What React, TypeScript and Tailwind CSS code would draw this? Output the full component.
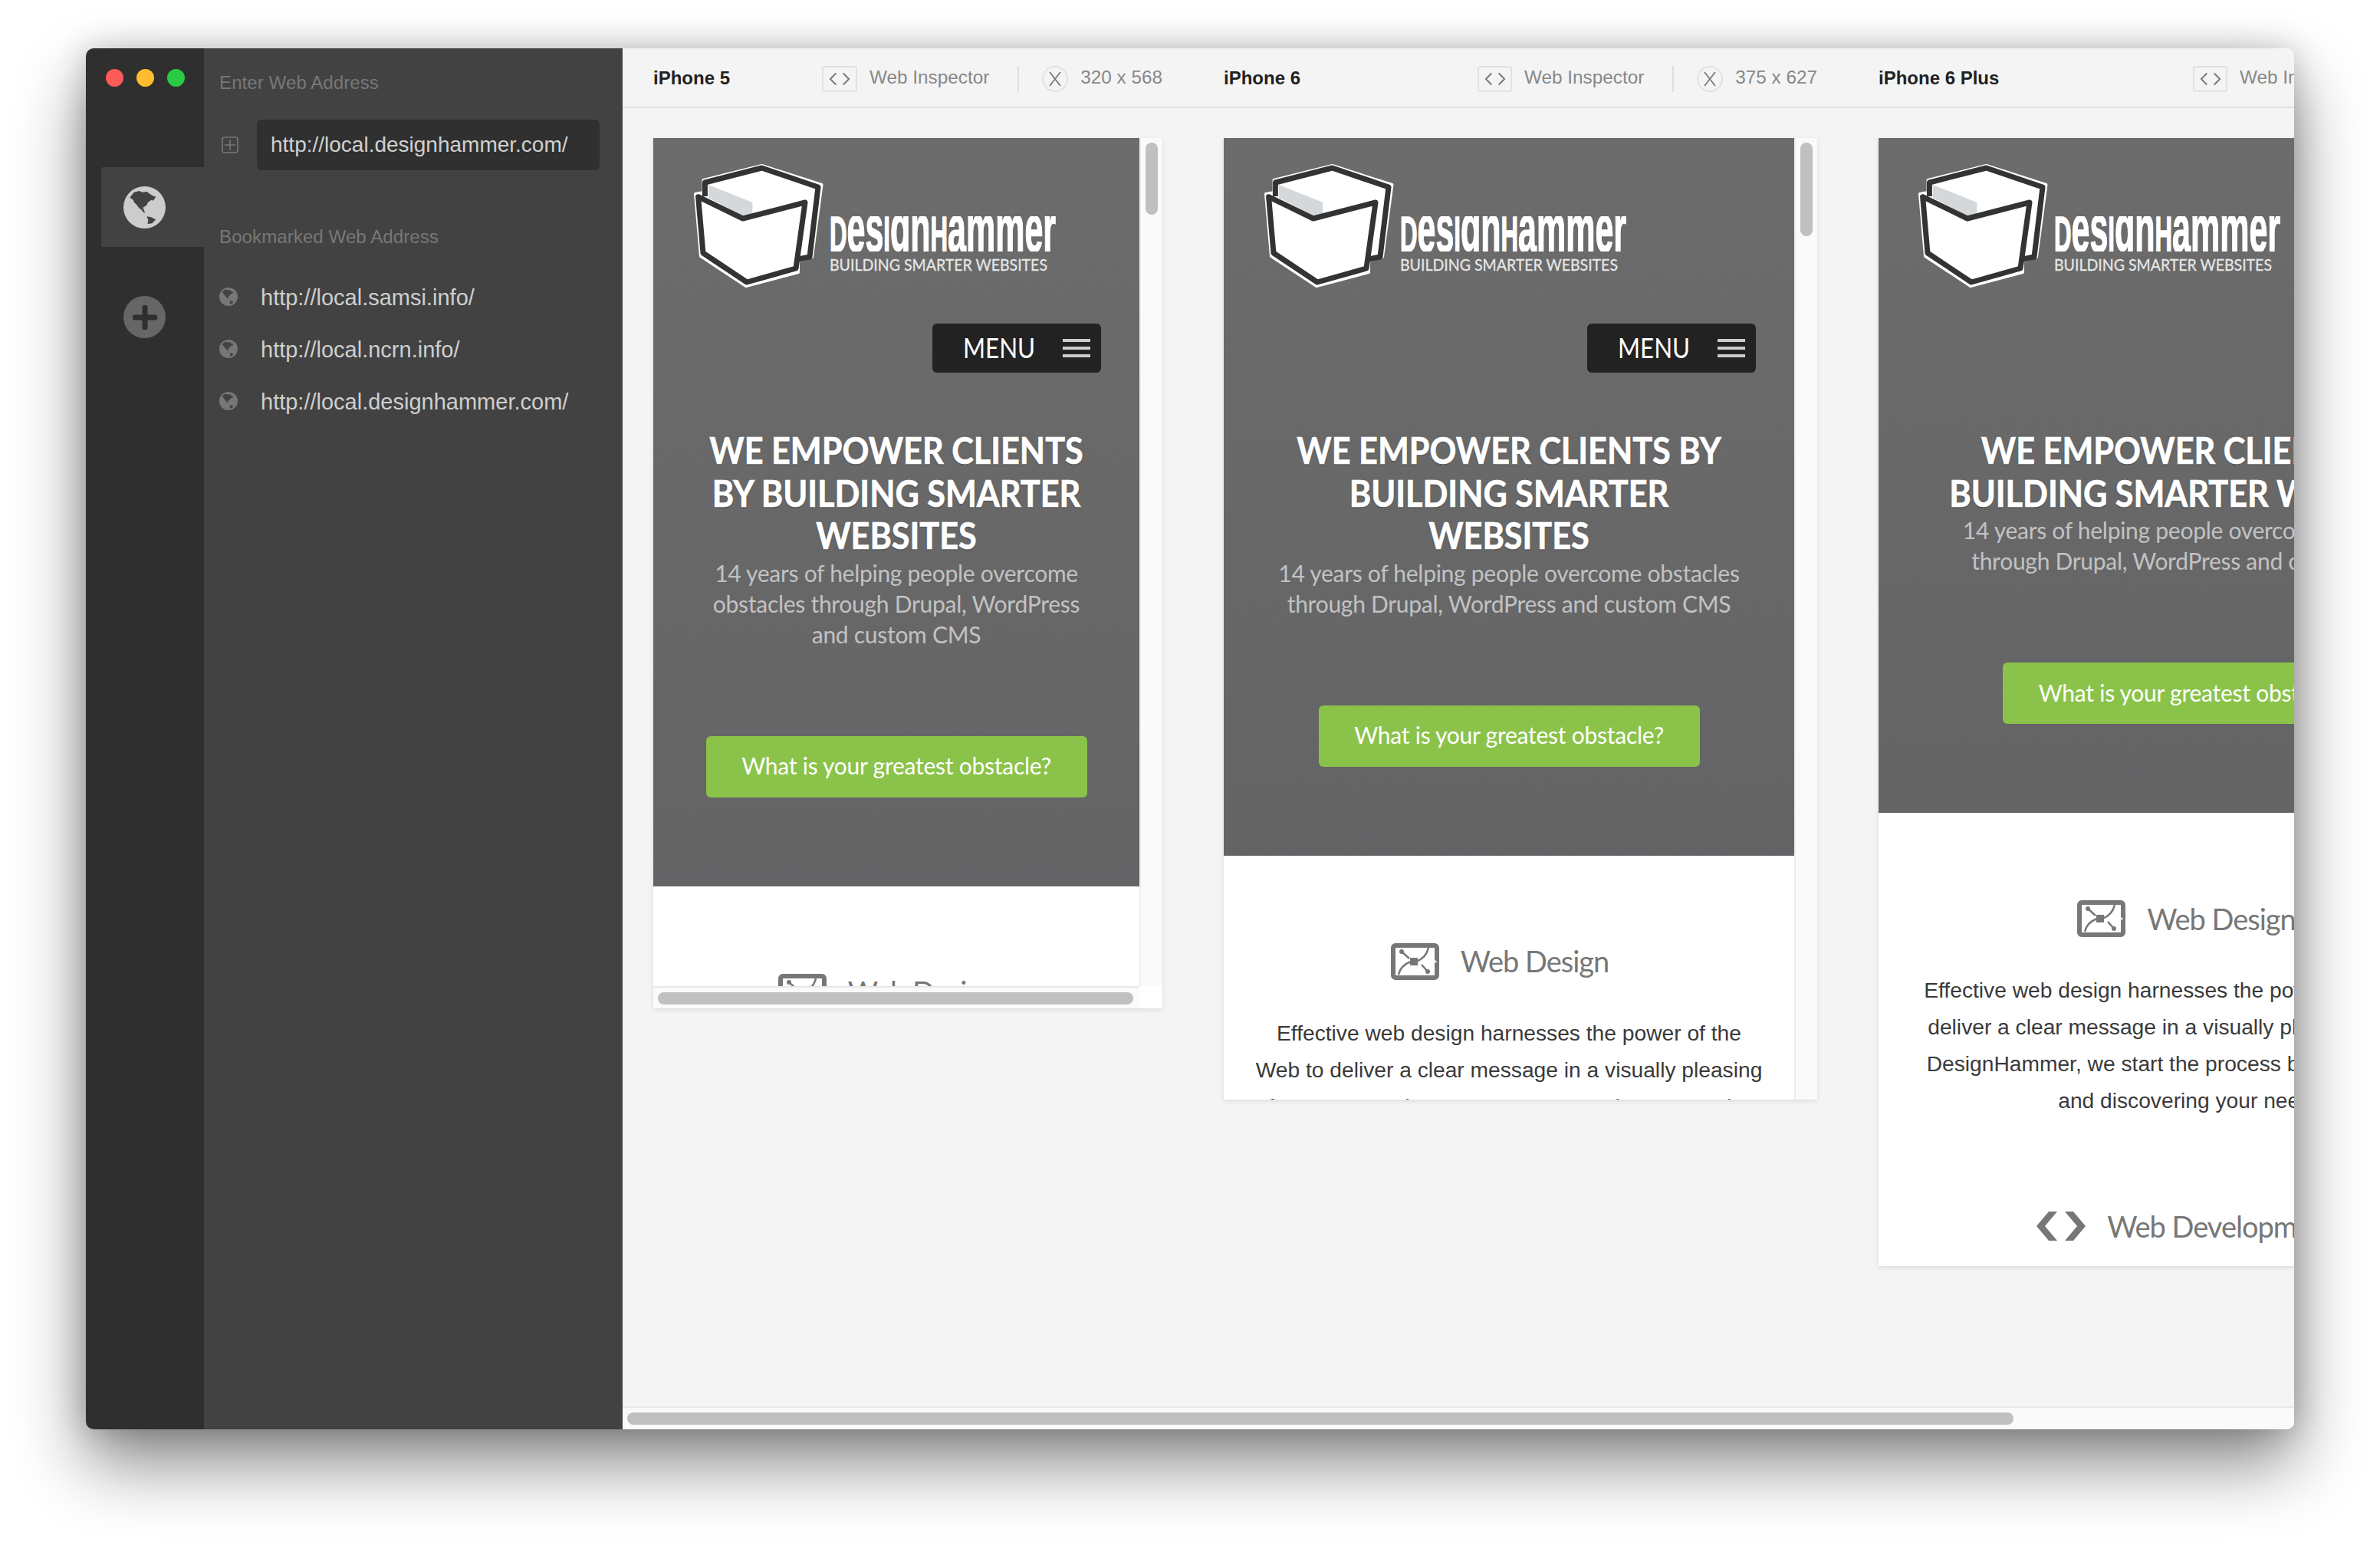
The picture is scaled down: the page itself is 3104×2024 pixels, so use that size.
import React from 'react';

type Device = {
  name: string;
  size: string;
  total: string;
  view: string;
  height: string;
  pad: string;
  thumb: string;
  heading: string[];
  sub: string[];
  body: string[];
  footerBar: boolean;
  devRow: boolean;
  btnW: string;
  rowPad: string;
};

const devices: Device[] = [
  {
    name: 'iPhone 5',
    size: '320 x 568',
    total: 'w-[664px]',
    view: 'w-[634px]',
    height: 'h-[1135px]',
    pad: 'pl-[53px]',
    thumb: 'h-[94px]',
    heading: ['WE EMPOWER CLIENTS', 'BY BUILDING SMARTER', 'WEBSITES'],
    sub: ['14 years of helping people overcome', 'obstacles through Drupal, WordPress', 'and custom CMS'],
    body: [],
    footerBar: true,
    devRow: false,
    btnW: 'w-[46px]',
    rowPad: 'pr-[24px]',
  },
  {
    name: 'iPhone 6',
    size: '375 x 627',
    total: 'w-[774px]',
    view: 'w-[744px]',
    height: 'h-[1254px]',
    pad: 'pl-[53px]',
    thumb: 'h-[122px]',
    heading: ['WE EMPOWER CLIENTS BY', 'BUILDING SMARTER', 'WEBSITES'],
    sub: ['14 years of helping people overcome obstacles', 'through Drupal, WordPress and custom CMS'],
    body: [
      'Effective web design harnesses the power of the',
      'Web to deliver a clear message in a visually pleasing',
      'format. At DesignHammer, we start the process by',
    ],
    footerBar: false,
    devRow: false,
    btnW: 'w-[45px]',
    rowPad: 'pr-[24px]',
  },
  {
    name: 'iPhone 6 Plus',
    size: '414 x 736',
    total: 'w-[853px]',
    view: 'w-[821px]',
    height: 'h-[1471px]',
    pad: 'pl-[52px]',
    thumb: 'h-[140px]',
    heading: ['WE EMPOWER CLIENTS BY', 'BUILDING SMARTER WEBSITES'],
    sub: ['14 years of helping people overcome obstacles', 'through Drupal, WordPress and custom CMS'],
    body: [
      'Effective web design harnesses the power of the Web to',
      'deliver a clear message in a visually pleasing format. At',
      'DesignHammer, we start the process by listening to you',
      'and discovering your needs.',
    ],
    footerBar: false,
    devRow: true,
    btnW: 'w-[45px]',
    rowPad: 'pr-[18px]',
  },
];

const bookmarks = ['http://local.samsi.info/', 'http://local.ncrn.info/', 'http://local.designhammer.com/'];

function Globe({ size, fill, land }: { size: string; fill: string; land: string }) {
  return (
    <svg viewBox="0 0 56 56" className={`${size} shrink-0`}>
      <circle cx="28" cy="28" r="28" fill={fill} />
      <path
        fill={land}
        d="M8.5 15 14 8l7-2 4 2 6-1 4 3 3 2 5 2-2 3-2 2-2-1-5 4-1 3-3 2-2 1 1 3 2 4-3-1-2-3-3-2-4-5-3-3-1-3z"
      />
      <path fill={land} d="M31 40l6 1 6 3-3 3-2 2-6 1 1-5z" />
    </svg>
  );
}

function Logo() {
  return (
    <svg viewBox="0 0 170 161" className="w-[170px] h-[161px] shrink-0">
      <path
        d="M88.5 2 166.5 27 154 121 136 126 136 141 68 159 9 120 2 39 12.5 37 12.5 21Z"
        fill="#fff"
        stroke="#fff"
        strokeWidth="4"
        strokeLinejoin="round"
      />
      <path d="M19 27 76.4 50 76.4 64 65 68 19 44Z" fill="#d5d8da" />
      <path
        d="M14.4 42V24L88.5 5 162 30 151 121 136 124"
        fill="none"
        stroke="#333"
        strokeWidth="7"
        strokeLinejoin="round"
      />
      <path
        d="M5.6 42.7 63.8 71 145 50 133 136 69 154 12 116Z"
        fill="#fff"
        stroke="#333"
        strokeWidth="7"
        strokeLinejoin="round"
      />
    </svg>
  );
}

function Wordmark() {
  return (
    <svg viewBox="0 0 295 72" className="w-[295px] h-[72px] shrink-0 ml-[7px] mt-[68px]">
      <defs>
        <clipPath id="wordmark-clip">
          <rect x="0" y="0" width="295" height="46" />
        </clipPath>
      </defs>
      <g clipPath="url(#wordmark-clip)">
        <text
          x="0"
          y="46"
          textLength="295"
          lengthAdjust="spacingAndGlyphs"
          fill="#fff"
          stroke="#fff"
          strokeWidth="1.6"
          fontWeight="700"
          className="font-['Liberation_Sans',sans-serif]"
        >
          <tspan fontSize="64">D</tspan>
          <tspan fontSize="88">es</tspan>
          <tspan fontSize="64">I</tspan>
          <tspan fontSize="88">gn</tspan>
          <tspan fontSize="64">H</tspan>
          <tspan fontSize="88">ammer</tspan>
        </text>
      </g>
      <text
        x="0"
        y="71"
        textLength="284"
        lengthAdjust="spacingAndGlyphs"
        fontSize="22"
        fill="#e6e6e6"
        stroke="#e6e6e6"
        strokeWidth="0.3"
        className="font-['Lato',sans-serif]"
      >
        BUILDING SMARTER WEBSITES
      </text>
    </svg>
  );
}

function TabletIcon() {
  return (
    <svg viewBox="0 0 63 48" className="w-[63px] h-[48px] shrink-0">
      <rect x="3" y="3" width="57" height="42" rx="3" fill="none" stroke="#777" strokeWidth="6" />
      <circle cx="58" cy="24" r="1.6" fill="#fff" />
      <path d="M14 11 24 20M40 28 48 37" stroke="#777" strokeWidth="2.5" />
      <circle cx="14" cy="11" r="3" fill="#777" />
      <circle cx="48" cy="37" r="3" fill="#777" />
      <path d="M10 41C12 32 18 27 26 24M49 6C47 15 41 21 33 24" fill="none" stroke="#777" strokeWidth="2.5" />
      <rect x="25" y="19" width="10" height="10" fill="#777" />
    </svg>
  );
}

function CodeIcon() {
  return (
    <svg viewBox="0 0 64 38" className="w-[64px] h-[38px] shrink-0">
      <path d="M27 0 11 19 27 38H16L0 19 16 0ZM37 0 53 19 37 38H48L64 19 48 0Z" fill="#777" />
    </svg>
  );
}

function DeviceHeader({ d }: { d: Device }) {
  return (
    <div className={`${d.total} shrink-0 flex items-center justify-between font-['Liberation_Sans',sans-serif]`}>
      <div className="text-[24px] font-bold text-[#222] whitespace-nowrap mt-[1px]">{d.name}</div>
      <div className="flex items-center">
        <div className={`${d.btnW} h-[34px] flex items-center justify-center rounded-[3px] border-2 border-[#e2e2e2] mt-[3px]`}>
          <svg viewBox="0 0 32 18" className="w-[30px] h-[18px]">
            <path d="M11 1 3 9l8 8M21 1l8 8-8 8" fill="none" stroke="#777" strokeWidth="2" />
          </svg>
        </div>
        <div className="ml-[16px] text-[24.3px] text-[#888] whitespace-nowrap mt-[1px]">Web Inspector</div>
        <div className="ml-[37px] h-[34px] w-[2px] bg-[#dedede] mt-[3px]" />
        <div className="ml-[30px] w-[34px] h-[34px] rounded-full border-2 border-[#e2e2e2] flex items-center justify-center mt-[3px]">
          <svg viewBox="0 0 20 24" className="w-[20px] h-[24px]">
            <path d="M3 3 17 21M17 3 3 21" fill="none" stroke="#777" strokeWidth="1.8" />
          </svg>
        </div>
        <div className="ml-[16px] text-[24.3px] text-[#888] whitespace-nowrap mt-[1px]">{d.size}</div>
      </div>
    </div>
  );
}

function DevicePreview({ d }: { d: Device }) {
  return (
    <div className={`${d.total} ${d.height} shrink-0 flex flex-col bg-[#fafafa] shadow-[0_2px_6px_rgba(0,0,0,0.1)]`}>
      <div className="flex flex-1 min-h-0">
        <div className={`${d.view} shrink-0 overflow-hidden bg-white`}>
          <div className="bg-linear-to-b from-[#6c6c6c] to-[#646466] pt-[34px] pb-[116px] text-center">
            <div className={`flex items-start ${d.pad}`}>
              <Logo />
              <Wordmark />
            </div>
            <div className="flex justify-end pr-[50px] mt-[47px]">
              <div className="w-[220px] h-[64px] shrink-0 rounded-[6px] bg-[#222] flex items-center justify-between pl-[40px] pr-[14px]">
                <span className="font-['Lato',sans-serif] text-[36px] text-white origin-left scale-x-[0.87] -mt-[3px]">MENU</span>
                <span className="flex flex-col gap-[6px]">
                  <span className="block w-[36px] h-[4px] bg-[#ccc]" />
                  <span className="block w-[36px] h-[4px] bg-[#ccc]" />
                  <span className="block w-[36px] h-[4px] bg-[#ccc]" />
                </span>
              </div>
            </div>
            <h1 className="mt-[73px] font-['Lato',sans-serif] font-bold text-[48px] leading-[55.5px] text-white whitespace-nowrap scale-x-[0.9] [-webkit-text-stroke:0.7px_white] [text-shadow:0_1px_2px_rgba(0,0,0,0.35)]">
              {d.heading.map((line) => (
                <div key={line}>{line}</div>
              ))}
            </h1>
            <div className="mt-[1px] font-['Lato',sans-serif] text-[30px] leading-[40px] tracking-[-0.28px] text-[#c2c2c2] whitespace-nowrap">
              {d.sub.map((line) => (
                <div key={line}>{line}</div>
              ))}
            </div>
            <div className="mt-[113px] mx-auto w-[497px] h-[80px] rounded-[6px] bg-[#8bc34a] flex items-center justify-center pb-[2px] font-['Lato',sans-serif] text-[30px] tracking-[-0.25px] text-white whitespace-nowrap">
              What is your greatest obstacle?
            </div>
          </div>
          <div className="pt-[114px] bg-white">
            <div className={`flex items-center justify-center gap-[28px] ${d.rowPad} h-[48px]`}>
              <TabletIcon />
              <span className="font-['Lato',sans-serif] text-[38px] tracking-[-1px] text-[#777] whitespace-nowrap">Web Design</span>
            </div>
            <div className="mt-[45px] text-center font-['Liberation_Sans',sans-serif] text-[28.2px] leading-[48px] text-[#3a3a3a] whitespace-nowrap">
              {d.body.map((line) => (
                <div key={line}>{line}</div>
              ))}
            </div>
            {d.devRow && (
              <div className={`mt-[116px] flex items-center justify-center gap-[28px] ${d.rowPad} h-[48px]`}>
                <CodeIcon />
                <span className="font-['Lato',sans-serif] text-[38px] tracking-[-1px] text-[#777] whitespace-nowrap">Web Development</span>
              </div>
            )}
          </div>
        </div>
        <div className="flex-1 border-l-2 border-[#eeeeee] pt-[6px] pl-[6px]">
          <div className={`${d.thumb} w-[16px] rounded-full bg-[#c0c0c0]`} />
        </div>
      </div>
      {d.footerBar && (
        <div className="h-[29px] shrink-0 flex">
          <div className={`${d.view} shrink-0 border-t-2 border-[#e8e8e8] pt-[6px] pl-[6px]`}>
            <div className="h-[16px] w-[620px] rounded-full bg-[#c0c0c0]" />
          </div>
          <div className="flex-1 bg-white" />
        </div>
      )}
    </div>
  );
}

export default function App() {
  return (
    <div className="w-[3104px] h-[2024px] bg-white overflow-hidden pt-[63px] pl-[112px]">
      <div className="w-[2880px] h-[1801px] flex rounded-[10px] overflow-hidden shadow-[0_44px_90px_rgba(0,0,0,0.48),0_0_40px_rgba(0,0,0,0.2)] font-['Liberation_Sans',sans-serif]">
        {/* icon rail */}
        <div className="w-[154px] shrink-0 bg-[#2f2f2f] pt-[27px]">
          <div className="flex gap-[17px] pl-[26px]">
            <span className="w-[23px] h-[23px] rounded-full bg-[#fc5b57]" />
            <span className="w-[23px] h-[23px] rounded-full bg-[#febc2e]" />
            <span className="w-[23px] h-[23px] rounded-full bg-[#2acb42]" />
          </div>
          <div className="mt-[105px] ml-[20px] h-[104px] bg-[#424242] rounded-l-[3px] flex items-center pl-[29px]">
            <Globe size="w-[55px] h-[55px]" fill="#cccccc" land="#424242" />
          </div>
          <div className="mt-[64px] ml-[49px] w-[55px] h-[55px] rounded-full bg-[#666] flex items-center justify-center">
            <svg viewBox="0 0 32 32" className="w-[32px] h-[32px]">
              <path d="M16 3v26M3 16h26" stroke="#2f2f2f" strokeWidth="7" strokeLinecap="round" />
            </svg>
          </div>
        </div>

        {/* address panel */}
        <div className="w-[546px] shrink-0 bg-[#424242] pl-[20px] pt-[31px]">
          <div className="text-[24.2px] leading-[28px] text-[#777]">Enter Web Address</div>
          <div className="mt-[34px] flex items-center">
            <svg viewBox="0 0 22 22" className="w-[22px] h-[22px] ml-[3px] shrink-0">
              <rect x="1" y="1" width="20" height="20" rx="3" fill="none" stroke="#777" strokeWidth="1.6" />
              <path d="M11 4v14M4 11h14" stroke="#777" strokeWidth="1.6" />
            </svg>
            <div className="ml-[24px] w-[447px] h-[66px] rounded-[6px] bg-[#303030] flex items-center pl-[18px] text-[28px] text-[#d0d0d0]">
              http://local.designhammer.com/
            </div>
          </div>
          <div className="mt-[73px] text-[24.2px] leading-[28px] text-[#777]">Bookmarked Web Address</div>
          <div className="mt-[30px]">
            {bookmarks.map((url) => (
              <div key={url} className="h-[68px] flex items-center">
                <Globe size="w-[24px] h-[24px]" fill="#777777" land="#424242" />
                <span className="ml-[30px] text-[29px] text-[#cfcfcf] mt-[4px]">{url}</span>
              </div>
            ))}
          </div>
        </div>

        {/* device canvas */}
        <div className="flex-1 min-w-0 flex flex-col bg-[#f4f4f4]">
          <div className="h-[78px] shrink-0 border-b-2 border-[#e2e2e2] flex gap-[80px] pl-[40px] overflow-hidden">
            {devices.map((d) => (
              <DeviceHeader key={d.name} d={d} />
            ))}
          </div>
          <div className="flex-1 min-h-0 flex items-start gap-[80px] pl-[40px] pt-[39px] overflow-hidden">
            {devices.map((d) => (
              <DevicePreview key={d.name} d={d} />
            ))}
          </div>
          <div className="h-[30px] shrink-0 bg-[#fafafa] border-t-2 border-[#e8e8e8] pt-[6px] pl-[6px]">
            <div className="w-[1808px] h-[16px] rounded-full bg-[#c0c0c0]" />
          </div>
        </div>
      </div>
    </div>
  );
}
